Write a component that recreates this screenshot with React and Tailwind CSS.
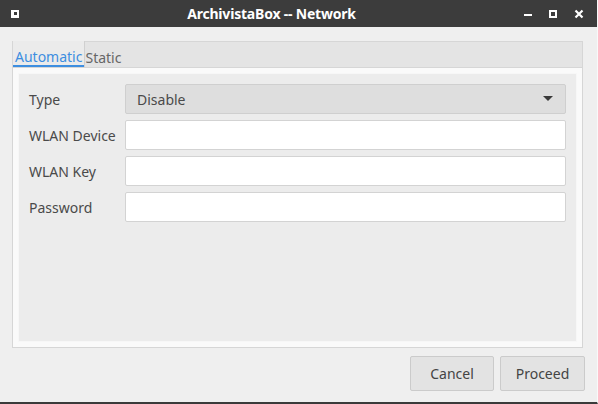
import React from 'react';

const Field = ({ label, children }) => (
  <div className="flex items-center h-[30px]">
    <div className="w-[106px] pl-[10px] text-[14px] text-[#4a4a4a]">{label}</div>
    {children}
  </div>
);

const Input = () => (
  <div className="w-[441px] h-[30px] bg-white border border-[#d3d3d3] rounded-[2px]" />
);

export default function App() {
  return (
    <div className="w-[598px] h-[404px] bg-[#efefef] flex flex-col border-r border-r-[#f9f9f9] border-b-2 border-b-[#3a3a3a] overflow-hidden" style={{ fontFamily: '"Noto Sans", "Open Sans", sans-serif' }}>
      {/* title bar */}
      <div className="h-[27px] bg-[#3c3c3c] flex items-center px-[10px] shrink-0">
        <div className="w-[8px] h-[8px] bg-white flex items-center justify-center ml-[1px]">
          <div className="w-[3px] h-[3px] bg-[#3c3c3c]" />
        </div>
        <div className="flex-1 text-center text-white font-bold text-[14px] tracking-[-0.2px]">ArchivistaBox -- Network</div>
        <div className="flex items-center gap-[17px] mr-[3px]">
          <div className="w-[8px] h-[2px] bg-white mt-[2px]" />
          <div className="w-[8px] h-[8px] bg-white flex items-center justify-center">
            <div className="w-[4px] h-[4px] bg-[#3c3c3c]" />
          </div>
          <svg width="10" height="10" viewBox="0 0 10 10">
            <path d="M1.5 1.5 L8.5 8.5 M8.5 1.5 L1.5 8.5" stroke="white" strokeWidth="2.2" />
          </svg>
        </div>
      </div>

      {/* body */}
      <div className="flex-1 flex flex-col pt-[14px] pl-[12px] pr-[12px]">
        <div className="w-[571px] h-[307px] bg-[#fafafa] border border-[#d6d6d6] flex flex-col">
          <div className="h-[26px] bg-[#e4e4e4] border-b border-[#d6d6d6] flex items-end">
            <div className="h-[26px] px-[2px] pt-[7px] flex items-center bg-[#ebebeb] border-b-2 border-[#3d8ee0] text-[14px] text-[#3d8ee0]">Automatic</div>
            <div className="h-[26px] pt-[7px] flex items-center text-[14px] text-[#666] border-l border-[#d0d0d0]">Static</div>
          </div>
          <div className="flex-1 p-[5px]">
            <div className="h-full bg-[#ececec] border border-[#f7f7f7] flex flex-col gap-[6px] pt-[10px]">
              <Field label="Type">
                <div className="w-[441px] h-[30px] bg-[#dedede] border border-[#cfcfcf] rounded-[2px] flex items-center justify-between pl-[11px] pr-[12px] text-[14px] text-[#4a4a4a]">
                  <span>Disable</span>
                  <svg width="10" height="6" viewBox="0 0 10 6"><path d="M0 0 L10 0 L5 5 Z" fill="#3a3a3a" /></svg>
                </div>
              </Field>
              <Field label="WLAN Device"><Input /></Field>
              <Field label="WLAN Key"><Input /></Field>
              <Field label="Password"><Input /></Field>
            </div>
          </div>
        </div>

        <div className="flex justify-end gap-[6px] mt-[8px]">
          <button className="w-[84px] h-[35px] bg-[#e3e3e3] border border-[#cbcbcb] rounded-[2px] text-[14px] text-[#444]">Cancel</button>
          <button className="w-[85px] h-[35px] bg-[#e3e3e3] border border-[#cbcbcb] rounded-[2px] text-[14px] text-[#444]">Proceed</button>
        </div>
      </div>
    </div>
  );
}
